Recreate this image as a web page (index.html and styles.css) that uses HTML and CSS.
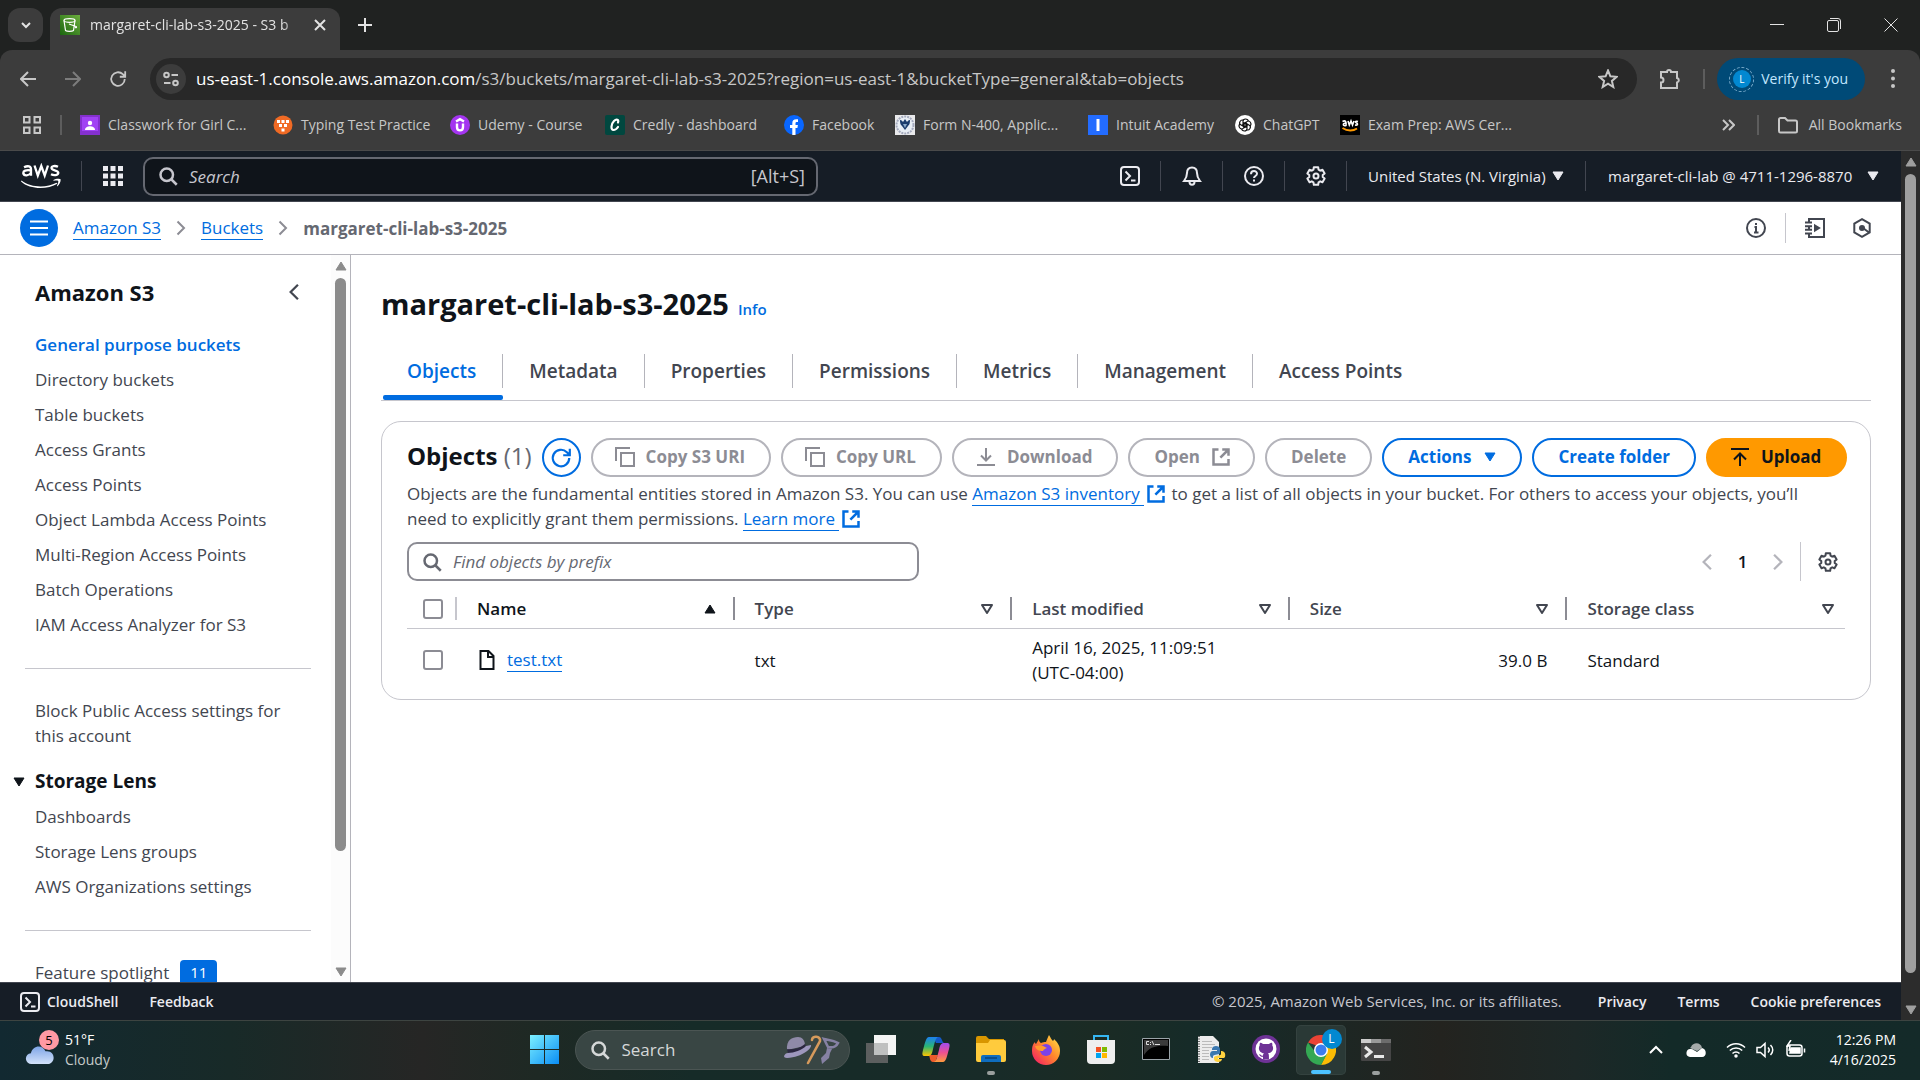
FILE: index.html
```html
<!DOCTYPE html>
<html lang="en">
<head>
<meta charset="utf-8">
<title>margaret-cli-lab-s3-2025 - S3 bucket</title>
<link rel="stylesheet" href="styles.css">
</head>
<body>
<svg class="sprite" aria-hidden="true">
  <symbol id="i-search" viewBox="0 0 16 16"><circle cx="7" cy="7" r="5"/><path d="M10.6 10.6 15 15"/></symbol>
  <symbol id="i-ext" viewBox="0 0 16 16"><path d="M6 2H2v12h12V9.500M9 2h5v5M14 2 7.500 8.500"/></symbol>
  <symbol id="i-copy" viewBox="0 0 20 20"><path d="M1 14V1h14M6 6h13v13H6z"/></symbol>
  <symbol id="i-gear" viewBox="0 0 20 20"><path stroke-linejoin="round" d="M12.180 1.270 12.550 3.700 14.190 4.640 16.470 3.750 18.650 7.520 16.730 9.050V10.950L18.650 12.480 16.470 16.250 14.190 15.360 12.550 16.300 12.180 18.730H7.820L7.450 16.300 5.810 15.360 3.530 16.250 1.350 12.480 3.270 10.950V9.050L1.350 7.520 3.530 3.750 5.810 4.640 7.450 3.700 7.820 1.270z"/><circle cx="10" cy="10" r="2.500"/></symbol>
  <symbol id="i-shell" viewBox="0 0 20 20"><rect x="1" y="1" width="18" height="18" rx="3"/><path d="m5.500 5.500 4.500 4.500-4.500 4.500M11 14.500h4.500"/></symbol>
  <symbol id="i-left" viewBox="0 0 16 16"><path d="M11.500 1.500 5 8l6.500 6.500"/></symbol>
  <symbol id="i-right" viewBox="0 0 16 16"><path d="M4.500 1.500 11 8l-6.500 6.500"/></symbol>
  <symbol id="i-down" viewBox="0 0 12 10"><path d="M1 1h10L6 9z"/></symbol>
  <symbol id="i-reload" viewBox="0 0 20 20"><path d="M17.500 10a7.500 7.500 0 1 1-2.200-5.300L18 7.300M18 1.500v6h-6"/></symbol>
</svg>

<header class="browser">
  <div class="tabstrip">
    <button class="tab-search" aria-label="Search tabs"><svg class="ln s12" viewBox="0 0 12 12"><path d="m2 4 4 4 4-4"/></svg></button>
    <div class="tab">
      <svg class="s20" viewBox="0 0 20 20"><defs><linearGradient id="g-s3" x1="0" y1="1" x2="1" y2="0"><stop stop-color="#1b660f"/><stop offset="1" stop-color="#6cae3e"/></linearGradient></defs><path fill="url(#g-s3)" d="M0 0h20v20H0z"/><g fill="none" stroke="#fff" stroke-width="1.200"><ellipse cx="9.500" cy="5.500" rx="5.500" ry="1.800"/><path d="m4 5.500 1.500 10c1.500 1.300 6.500 1.300 8 0l1.500-10M9 9l7 2.500c1 .5.500 1.500-1 1"/></g></svg>
      <span class="tab-title">margaret-cli-lab-s3-2025 - S3 b</span>
      <button class="plain" aria-label="Close tab"><svg class="ln s14" viewBox="0 0 14 14"><path d="m2 2 10 10M12 2 2 12"/></svg></button>
    </div>
    <button class="plain new-tab" aria-label="New tab"><svg class="ln s14" viewBox="0 0 14 14"><path d="M7 0v14M0 7h14"/></svg></button>
    <div class="win-controls">
      <button class="plain" aria-label="Minimize"><svg class="ln thin s14" viewBox="0 0 14 14"><path d="M0 6.500h14"/></svg></button>
      <button class="plain" aria-label="Restore"><svg class="ln thin s14" viewBox="0 0 14 14"><rect x=".5" y="2.500" width="11" height="11" rx="1.500"/><path d="M3 .5h8a2.500 2.500 0 0 1 2.500 2.500v8"/></svg></button>
      <button class="plain" aria-label="Close"><svg class="ln thin s14" viewBox="0 0 14 14"><path d="m.5.5 13 13M13.500.5l-13 13"/></svg></button>
    </div>
  </div>
  <div class="toolbar">
    <div class="nav-row">
      <div class="nav-btns">
        <button class="plain" aria-label="Back"><svg class="ln s16" viewBox="0 0 16 16"><path d="M16 8H1.500M8 1 1 8l7 7"/></svg></button>
        <button class="plain dim" aria-label="Forward"><svg class="ln s16" viewBox="0 0 16 16"><path d="M0 8h14.500M8 1l7 7-7 7"/></svg></button>
        <button class="plain" aria-label="Reload"><svg class="ln s18"><use href="#i-reload"/></svg></button>
      </div>
      <div class="omnibox">
        <span class="site-info"><svg class="ln s16" viewBox="0 0 16 16"><circle cx="3.500" cy="4" r="2.300"/><path d="M8.500 4H15M1 12h6.500"/><circle cx="12.500" cy="12" r="2.300"/></svg></span>
        <p class="url"><b>us-east-1.console.aws.amazon.com</b>/s3/buckets/margaret-cli-lab-s3-2025?region=us-east-1&amp;bucketType=general&amp;tab=objects</p>
        <svg class="ln s20" viewBox="0 0 20 20"><path d="m10 1.500 2.400 5.800 6.200.5-4.700 4.100 1.400 6.100-5.300-3.300L4.700 18l1.400-6.100-4.700-4.100 6.200-.5z"/></svg>
      </div>
      <button class="plain puzzle" aria-label="Extensions"><svg class="ln s22" viewBox="0 0 22 22"><path d="M2 4h6a2 2 0 0 1 4 0h6v6a2.300 2.300 0 0 1 0 4.500V20H2v-5.500a2.500 2.500 0 0 0 0-5z"/></svg></button>
      <i class="vsep"></i>
      <button class="verify"><span class="ring"><span>L</span></span>Verify it's you</button>
      <button class="plain kebab" aria-label="Menu"><svg class="s22 fill" viewBox="0 0 22 22"><circle cx="11" cy="3" r="2"/><circle cx="11" cy="10.500" r="2"/><circle cx="11" cy="18" r="2"/></svg></button>
    </div>
    <nav class="bookmarks">
      <svg class="ln s18 apps" viewBox="0 0 18 18"><path d="M1 1h5.500v5.500H1zM11.500 1H17v5.500h-5.500zM1 11.500h5.500V17H1zM11.500 11.500H17V17h-5.500z"/></svg>
      <i class="vsep"></i>
      <div class="bm-list">
        <a href="#"><svg class="s20" viewBox="0 0 20 20"><path fill="#8430ce" d="M0 0h20v20H0z"/><path fill="#a142f4" d="M2 2h16v14H2z"/><circle cx="10" cy="8" r="2.200" fill="#fff"/><path fill="#fff" d="M5 15c0-5 10-5 10 0z"/></svg>Classwork for Girl C...</a>
        <a href="#"><svg class="s20" viewBox="0 0 20 20"><circle cx="10" cy="10" r="9.500" fill="#f06a24"/><path fill="#fff" d="M4 5h3v3H4zm4.500 0h3v3h-3zM13 5h3v3h-3zM6 9h3v3H6zm5 0h3v3h-3zm-2.500 4.500h3v3h-3z"/></svg>Typing Test Practice</a>
        <a href="#"><svg class="s20" viewBox="0 0 20 20"><circle cx="10" cy="10" r="10" fill="#a435f0"/><path fill="none" stroke="#fff" stroke-width="2.400" d="m6 6.500 4-2.300 4 2.300M7 8.500V12c0 4.500 6 4.500 6 0V8.500"/></svg>Udemy - Course</a>
        <a href="#"><svg class="s20" viewBox="0 0 20 20"><rect width="20" height="20" rx="2" fill="#00473f"/><path fill="none" stroke="#fff" stroke-width="2.200" stroke-linecap="round" d="M13 7.500c1-3-1.500-4-4-1.500-3 3-3.500 9-.5 9 2 0 3.500-1.500 4.500-3"/></svg>Credly - dashboard</a>
        <a href="#"><svg class="s20" viewBox="0 0 20 20"><circle cx="10" cy="10" r="10" fill="#0866ff"/><path fill="#fff" d="M8.300 20v-7H6v-3h2.300V8.500C8.300 5 10 3.800 14 4.300V7c-2-.1-2.500.2-2.500 1.500V10h2.400l-.5 3h-1.900v7z"/></svg>Facebook</a>
        <a href="#"><svg class="s20" viewBox="0 0 20 20"><path fill="#e9eaec" d="M0 0h20v20H0z"/><circle cx="10" cy="10" r="8.500" fill="#e8eef5" stroke="#a3a9bd" stroke-width="2" stroke-dasharray="2 1"/><path fill="#1b3d6d" d="M5 5c2 0 2 1 3 2l2-3 2 3c1-1 1-2 3-2 0 4-1 5-2 6l-3 4-3-4C6 10 5 9 5 5z"/><path fill="#8aa9c9" d="M8 9h4l-2 4z"/></svg>Form N-400, Applic...</a>
        <a href="#"><svg class="s20" viewBox="0 0 20 20"><path fill="#236cff" d="M0 0h20v20H0z"/><path fill="#fff" d="M8.500 4h3v12h-3z"/></svg>Intuit Academy</a>
        <a href="#"><svg class="s20" viewBox="0 0 20 20"><circle cx="10" cy="10" r="10" fill="#fff"/><g fill="none" stroke="#111" stroke-width="1.100"><path id="petal" d="M8 10.500V6.200c0-3 5-3 5.300 0M8 7.500l4.500 2.600"/><use href="#petal" transform="rotate(60 10 10)"/><use href="#petal" transform="rotate(120 10 10)"/><use href="#petal" transform="rotate(180 10 10)"/><use href="#petal" transform="rotate(240 10 10)"/><use href="#petal" transform="rotate(300 10 10)"/></g></svg>ChatGPT</a>
        <a href="#"><svg class="s20" viewBox="0 0 20 20"><path d="M0 0h20v20H0z"/><g fill="none" stroke="#fff" stroke-width="1.600"><path d="M2.500 6.500c3-1.500 4 0 3.500 4-3 1-4-2 0-2.500M8 6l1.300 4L11 6l1.500 4L14 6M18 6.500c-3-1-3 1-1.500 1.500s1.500 2.500-1.500 2"/></g><path fill="none" stroke="#f90" stroke-width="1.800" d="M2.500 13c5 3.500 11 3 14.500.5"/></svg>Exam Prep: AWS Cer...</a>
      </div>
      <svg class="ln s14 chev2" viewBox="0 0 14 14"><path d="m2 2 5 5-5 5M8 2l5 5-5 5"/></svg>
      <i class="vsep"></i>
      <a href="#" class="all-bm"><svg class="ln s20" viewBox="0 0 20 20"><path d="M1 4.500a1.500 1.500 0 0 1 1.500-1.500H7l2.500 2.500h8A1.500 1.500 0 0 1 19 7v9a1.500 1.500 0 0 1-1.500 1.500h-15A1.500 1.500 0 0 1 1 16z"/></svg>All Bookmarks</a>
    </nav>
  </div>
</header>

<div class="viewport">
  <div class="console">
    <header class="aws-nav">
      <a href="#" class="logo" aria-label="AWS home"><svg viewBox="0 0 40 24"><g fill="none" stroke="#fff" stroke-width="2.300"><path d="M3 3.300c4-2 7-1 7 2v6.500M10 6.500C5 5.500 2 7 2.300 9.300c.5 3 6 2.500 7.700-.6M13.500 1.500l3.300 10L20.300 2l3.400 9.500L27 1.500M37 2.800c-3-1.500-6.500-.8-6.500 1.300 0 2.900 6.800 1.500 6.800 4.700 0 2.500-4.300 3-7.300 1.400"/></g><path fill="#fff" d="M.5 16.500c10 7.500 25 7.500 35 2.200l.8 1C27 25.500 9 26 0 17.500zM32.500 16c2-1.500 6.500-1.500 7-.7.500 1-.5 5-3 6.900-.4.200-.7 0-.5-.4.700-1.800 1.600-4.200 1.200-4.900-.5-.6-2.800-.4-4.300-.2-.5.100-.8-.3-.4-.7z"/></svg></a>
      <i class="sep"></i>
      <button class="plain grid9" aria-label="Services"><svg class="s20" viewBox="0 0 20 20"><path fill="#ebebf0" d="M0 0h5v5H0zm7.500 0h5v5h-5zM15 0h5v5h-5zM0 7.500h5v5H0zm7.500 0h5v5h-5zm7.500 0h5v5h-5zM0 15h5v5H0zm7.500 0h5v5h-5zm7.500 0h5v5h-5z"/></svg></button>
      <label class="aws-search"><svg class="ln s20"><use href="#i-search"/></svg><input type="text" placeholder="Search" aria-label="Search"><kbd>[Alt+S]</kbd></label>
      <div class="aws-right">
        <button class="plain cell" aria-label="CloudShell"><svg class="ln s20"><use href="#i-shell"/></svg></button><i class="sep"></i>
        <button class="plain cell" aria-label="Notifications"><svg class="ln s20" viewBox="0 0 20 20"><path d="M10 1.500c-3.500 0-5 2.500-5 5.500 0 4-1 5.500-3 8h16c-2-2.500-3-4-3-8 0-3-1.500-5.500-5-5.500zM7.500 16c0 3.500 5 3.500 5 0"/></svg></button><i class="sep"></i>
        <button class="plain cell" aria-label="Help"><svg class="ln s20" viewBox="0 0 20 20"><circle cx="10" cy="10" r="9"/><path d="M7 8.200C7 4 13 4.300 13 7.700c0 2.300-3 2.200-3 4.300M10 13.500v2"/></svg></button><i class="sep"></i>
        <button class="plain cell" aria-label="Settings"><svg class="ln s20"><use href="#i-gear"/></svg></button><i class="sep"></i>
        <button class="plain region">United States (N. Virginia)<svg class="tri"><use href="#i-down"/></svg></button><i class="sep"></i>
        <button class="plain account">margaret-cli-lab @ 4711-1296-8870<svg class="tri"><use href="#i-down"/></svg></button>
      </div>
    </header>

    <div class="crumb-bar">
      <button class="menu-btn" aria-label="Open navigation"><svg viewBox="0 0 18 16"><path d="M0 1.500h18M0 8h18M0 14.500h18"/></svg></button>
      <nav class="crumbs" aria-label="Breadcrumbs">
        <a href="#">Amazon S3</a><svg class="ln s16"><use href="#i-right"/></svg><a href="#">Buckets</a><svg class="ln s16"><use href="#i-right"/></svg><b>margaret-cli-lab-s3-2025</b>
      </nav>
      <div class="crumb-tools">
        <button class="plain" aria-label="Info"><svg class="ln s20" viewBox="0 0 20 20"><circle cx="10" cy="10" r="9"/><path d="M10 5v2M8.500 9H10v5M8 14.500h4.500"/></svg></button>
        <i class="sep"></i>
        <button class="plain" aria-label="Tutorials"><svg class="ln s20" viewBox="0 0 20 20"><path d="M4 5V1h15v18H4v-4M4 8v4M0 4.500h7M0 8.200h7M0 11.800h7M0 15.500h7"/><path d="m10 7.500 4 2.500-4 2.500z" fill="currentColor"/></svg></button>
        <button class="plain" aria-label="Recents"><svg class="ln s20" viewBox="0 0 20 20"><path d="m10 1.200 7.700 4.400v8.800L10 18.800l-7.700-4.400V5.600zM11 10l6 4.500"/><circle cx="10" cy="10" r="2" fill="currentColor"/></svg></button>
      </div>
    </div>

    <div class="workspace">
      <aside class="sidebar">
        <div class="side-scroll">
          <div class="side-head"><h2>Amazon S3</h2><button class="plain" aria-label="Close navigation"><svg class="ln s18"><use href="#i-left"/></svg></button></div>
          <ul class="side-list">
            <li><a href="#" class="on">General purpose buckets</a></li>
            <li><a href="#">Directory buckets</a></li>
            <li><a href="#">Table buckets</a></li>
            <li><a href="#">Access Grants</a></li>
            <li><a href="#">Access Points</a></li>
            <li><a href="#">Object Lambda Access Points</a></li>
            <li><a href="#">Multi-Region Access Points</a></li>
            <li><a href="#">Batch Operations</a></li>
            <li><a href="#">IAM Access Analyzer for S3</a></li>
          </ul>
          <hr>
          <ul class="side-list"><li><a href="#">Block Public Access settings for this account</a></li></ul>
          <h3><svg class="tri"><use href="#i-down"/></svg>Storage Lens</h3>
          <ul class="side-list">
            <li><a href="#">Dashboards</a></li>
            <li><a href="#">Storage Lens groups</a></li>
            <li><a href="#">AWS Organizations settings</a></li>
          </ul>
          <hr>
          <ul class="side-list"><li><a href="#">Feature spotlight</a><span class="badge">11</span></li></ul>
        </div>
        <div class="scrollbar light"><svg class="arrow" viewBox="0 0 12 10"><path d="M6 1 1 9h10z"/></svg><div class="track"><div class="thumb"></div></div><svg class="arrow" viewBox="0 0 12 10"><path d="M1 1h10L6 9z"/></svg></div>
      </aside>

      <main>
        <div class="title-row"><h1>margaret-cli-lab-s3-2025</h1><a href="#">Info</a></div>
        <nav class="tabs">
          <a href="#" class="on"><span>Objects</span></a><a href="#"><span>Metadata</span></a><a href="#"><span>Properties</span></a><a href="#"><span>Permissions</span></a><a href="#"><span>Metrics</span></a><a href="#"><span>Management</span></a><a href="#"><span>Access Points</span></a>
        </nav>
        <section class="card">
          <div class="card-head">
            <h2>Objects <span>(1)</span></h2>
            <div class="actions">
              <button class="btn round" aria-label="Refresh"><svg class="ln s22"><use href="#i-reload"/></svg></button>
              <button class="btn off" disabled><svg class="ln s20"><use href="#i-copy"/></svg>Copy S3 URI</button>
              <button class="btn off" disabled><svg class="ln s20"><use href="#i-copy"/></svg>Copy URL</button>
              <button class="btn off" disabled><svg class="ln s20" viewBox="0 0 20 20"><path d="M10 1v12M5 8.500l5 5 5-5M1 18h18"/></svg>Download</button>
              <button class="btn off" disabled>Open<svg class="ln s20"><use href="#i-ext"/></svg></button>
              <button class="btn off" disabled>Delete</button>
              <button class="btn">Actions<svg class="tri"><use href="#i-down"/></svg></button>
              <button class="btn">Create folder</button>
              <button class="btn primary"><svg class="ln s20" viewBox="0 0 20 20"><path d="M10 19V7M4 12.500l6-6 6 6M1 2h18"/></svg>Upload</button>
            </div>
          </div>
          <p class="desc">Objects are the fundamental entities stored in Amazon S3. You can use <a href="#"><span>Amazon S3 inventory </span><svg class="ln s20"><use href="#i-ext"/></svg></a> to get a list of all objects in your bucket. For others to access your objects, you’ll need to explicitly grant them permissions. <a href="#"><span>Learn more </span><svg class="ln s20"><use href="#i-ext"/></svg></a></p>
          <div class="filter-row">
            <label class="filter"><svg class="ln s20"><use href="#i-search"/></svg><input type="text" placeholder="Find objects by prefix" aria-label="Find objects by prefix"></label>
            <div class="pager">
              <button class="plain pg" aria-label="Previous page"><svg class="ln s18"><use href="#i-left"/></svg></button>
              <b>1</b>
              <button class="plain pg" aria-label="Next page"><svg class="ln s18"><use href="#i-right"/></svg></button>
              <i class="sep"></i>
              <button class="plain prefs" aria-label="Preferences"><svg class="ln s20"><use href="#i-gear"/></svg></button>
            </div>
          </div>
          <table>
            <colgroup><col class="c-check"><col><col><col><col><col></colgroup>
            <thead><tr>
              <th><input type="checkbox" aria-label="Select all"></th>
              <th class="sorted"><div>Name<svg class="tri" viewBox="0 0 12 10"><path d="M6 1 1 9h10z"/></svg></div></th>
              <th><div>Type<svg class="tri open"><use href="#i-down"/></svg></div></th>
              <th><div>Last modified<svg class="tri open"><use href="#i-down"/></svg></div></th>
              <th><div>Size<svg class="tri open"><use href="#i-down"/></svg></div></th>
              <th><div>Storage class<svg class="tri open"><use href="#i-down"/></svg></div></th>
            </tr></thead>
            <tbody><tr>
              <td><input type="checkbox" aria-label="Select test.txt"></td>
              <td><span class="file"><svg class="ln s20" viewBox="0 0 20 20"><path d="M3.500 1h8l5 5v13h-13zM11 1v6h5.500"/></svg><a href="#">test.txt</a></span></td>
              <td>txt</td>
              <td>April 16, 2025, 11:09:51<br>(UTC-04:00)</td>
              <td class="num">39.0 B</td>
              <td>Standard</td>
            </tr></tbody>
          </table>
        </section>
      </main>
    </div>

    <footer class="aws-foot">
      <a href="#"><svg class="ln s20"><use href="#i-shell"/></svg>CloudShell</a>
      <a href="#">Feedback</a>
      <span class="legal">© 2025, Amazon Web Services, Inc. or its affiliates.</span>
      <a href="#">Privacy</a>
      <a href="#">Terms</a>
      <a href="#">Cookie preferences</a>
    </footer>
  </div>
  <div class="scrollbar dark"><svg class="arrow" viewBox="0 0 12 10"><path d="M6 1 1 9h10z"/></svg><div class="track"><div class="thumb"></div></div><svg class="arrow" viewBox="0 0 12 10"><path d="M1 1h10L6 9z"/></svg></div>
</div>

<footer class="taskbar">
  <div class="weather">
    <div class="cloud"><svg viewBox="0 0 32 22"><defs><linearGradient id="g-cl" x2="0" y2="1"><stop stop-color="#7ea4e6"/><stop offset="1" stop-color="#d3e2fa"/></linearGradient></defs><path fill="url(#g-cl)" d="M7 21a6 6 0 0 1-1-12C8 0 19-1 22 7c6-1 9 3 9 7s-3 7-7 7z"/></svg><span>5</span></div>
    <p>51°F<br><span>Cloudy</span></p>
  </div>
  <div class="apps-row">
    <button class="plain app" aria-label="Start"><svg class="s30" viewBox="0 0 30 30"><defs><linearGradient id="g-win" x2="1" y2="1"><stop stop-color="#7cf0ff"/><stop offset="1" stop-color="#0a8df5"/></linearGradient></defs><path fill="url(#g-win)" d="M0 0h14v14H0zm15 0h14v14H15zM0 15h14v14H0zm15 0h14v14H15z"/></svg></button>
    <label class="tb-search"><svg class="ln s20"><use href="#i-search"/></svg><input type="text" placeholder="Search" aria-label="Search Windows">
      <svg class="art" viewBox="0 0 56 30"><path fill="#8f8aa8" d="M3 15C2 5 8 2 14 2c4 0 7 3 7 9z"/><path fill="#2b2740" d="M3 14c5 1 12 0 18-5l1 3c-5 5-12 7-18 6z"/><path fill="#9d97bd" d="M0 21c1-2 2-3 4-3 6 0 14-3 18-7l5-1c1 3-8 12-24 13-2 0-3-1-3-2z"/><path fill="none" stroke="#d69a5c" stroke-width="2.600" stroke-linecap="round" d="M28 5c0-5 9-4 8 1L24 28"/><path fill="none" stroke="#8681a3" stroke-width="2.600" d="M40 4c4 1 9 1 14 4-2 4-6 5-10 4z"/><path fill="#8681a3" d="m43 13 5 1-2 4-1 5-7 6-1-6 5-5z"/></svg></label>
    <button class="plain app" aria-label="Task view"><svg class="s30" viewBox="0 0 30 30"><path fill="#5c5f5f" d="M0 8h22v20H0z"/><path fill="#f4f4f4" d="M8 0h22v20H8z"/><path fill="#bfc0c0" d="M8 8h14v12H8z"/></svg></button>
    <button class="plain app" aria-label="Copilot"><svg class="s30" viewBox="0 0 30 30"><defs><linearGradient id="g-ca" x2="0" y2="1"><stop stop-color="#1c7ff0"/><stop offset=".5" stop-color="#2bb673"/><stop offset="1" stop-color="#ffc500"/></linearGradient><linearGradient id="g-cb" x2="0" y2="1"><stop stop-color="#a04cf0"/><stop offset=".5" stop-color="#ee4f93"/><stop offset="1" stop-color="#ff9b3d"/></linearGradient></defs><path fill="#1459c7" d="M12 2h6c3 0 3 5 5 6h-8z"/><path fill="#ef5b2c" d="M8 20h9l-3 7h-2c-3 0-3-4-4-7z"/><path fill="url(#g-ca)" d="M8 2h9c-3 2-3 5-5 12-1 5-2 7-5 7H4c-3 0-3-2-2-6C4 8 5 2 8 2z"/><path fill="url(#g-cb)" d="M22 27h-9c3-2 3-5 5-12 1-5 2-7 5-7h3c3 0 3 2 2 6-2 7-3 13-6 13z"/></svg></button>
    <button class="plain app run" aria-label="File Explorer"><svg class="s30" viewBox="0 0 30 30"><path fill="#d89600" d="M0 3a2 2 0 0 1 2-2h8l3 3h15v6H0z"/><path fill="#ffcb3d" d="M0 8h12l2-3h14a2 2 0 0 1 2 2v18a2 2 0 0 1-2 2H2a2 2 0 0 1-2-2z"/><path fill="#0f6dbf" d="M5 27v-5a2 2 0 0 1 2-2h16a2 2 0 0 1 2 2v5z"/><path fill="#0a4d8c" d="M9 22h12v2H9z"/></svg></button>
    <button class="plain app" aria-label="Firefox"><svg class="s30" viewBox="0 0 30 30"><defs><linearGradient id="g-ff" x1="1" x2="0" y2="1"><stop stop-color="#ffe94a"/><stop offset=".45" stop-color="#ff8a2b"/><stop offset="1" stop-color="#f4106c"/></linearGradient></defs><path fill="url(#g-ff)" d="M18 0c2 3 2 4 4 6 1-1 1-2 1-2 4 4 6 7 6 12a14 14 0 0 1-28 0c0-5 1-7 3-9 0 1 0 1 1 2l3-5c0 3 1 3 2 4 2-1 3-1 5-1 1-3 2-5 3-7z"/><circle cx="15" cy="15" r="6" fill="#7b42e8"/><path fill="#ff9a2e" d="M4 11c4-1 8-1 12 2-2 1-3 1-4 3-4 0-7-1-8-5z"/></svg></button>
    <button class="plain app" aria-label="Microsoft Store"><svg class="s30" viewBox="0 0 30 30"><path fill="none" stroke="#35b6f2" stroke-width="2" d="M8 7V1h14v6"/><path fill="#eee" d="M1 5h28v20a4 4 0 0 1-4 4H5a4 4 0 0 1-4-4z"/><path fill="#f25022" d="M10 12h5v5h-5z"/><path fill="#7fba00" d="M16 12h5v5h-5z"/><path fill="#00a4ef" d="M10 18h5v5h-5z"/><path fill="#ffb900" d="M16 18h5v5h-5z"/></svg></button>
    <button class="plain app" aria-label="Command Prompt"><svg class="s30" viewBox="0 0 30 30"><path stroke="#9aa3a8" d="M1.500 3.500h27v21h-27z"/><path fill="#3a3a3a" d="M3 5h24v6C16 10 8 12 3 20z"/><path fill="none" stroke="#ddd" d="M8 6.500H5.500v3H8M9.500 7v1m0 1v1M11 6l2 4M14 9.500h5"/></svg></button>
    <button class="plain app" aria-label="IDLE"><svg class="s30" viewBox="0 0 30 30"><path fill="#ececec" d="M2 1h15l6 6v21H2z"/><path fill="none" stroke="#666" stroke-dasharray="1 1.500" stroke-width="2" d="M3 1v27"/><path fill="none" stroke="#bbb" d="M6 6.500h10M6 9.500h13M6 12.500h10M6 15.500h7M6 18.500h7M6 21.500h7M6 24.500h7"/><path fill="#3b78b0" d="M16 14c0-4 8-4 8 0v4c0 2-6 1-7 3v2c-4 0-4-7 0-7h4v-1h-5z"/><path fill="#ffd23f" d="M29 22c1-4-1-6-4-6v3c0 2-5 1-7 3v2c0 4 8 4 8 0h-4v-1h6z"/></svg></button>
    <button class="plain app" aria-label="GitHub Desktop"><svg class="s30" viewBox="0 0 30 30"><circle cx="15" cy="14" r="14" fill="#6e3296"/><circle cx="15" cy="14" r="10.500" fill="#fff"/><path fill="#6e3296" d="M9 8c1-1 3 1 3 1h6s2-2 3-1c.6 1 .3 2.500.3 2.500C23.500 14 21 18 17 18.300c1 1 1 2 1 6h-6v-2.500c-2.500.5-3-1-4-2.500 2-.3 2 2 4 1.200 0-1 .3-1.500 1-2.200-4-.3-6.500-4.300-4.300-7.800C8.700 10.500 8.400 9 9 8z"/></svg></button>
    <button class="plain app run active" aria-label="Chrome"><svg class="s30" viewBox="0 0 30 30"><path fill="#ea4335" d="M2 7.500a15 15 0 0 1 26 0L15 12z"/><path fill="#fbbc04" d="M28 7.500A15 15 0 0 1 15 30l6-12-3-10.500z"/><path fill="#34a853" d="M2 7.500A15 15 0 0 0 15 30l6-11-11-1z"/><circle cx="15" cy="15" r="7" fill="#fff"/><circle cx="15" cy="15" r="5.500" fill="#3c7df0"/></svg><span class="who">L</span></button>
    <button class="plain app run" aria-label="Terminal"><svg class="s30" viewBox="0 0 30 30"><rect y="4" width="30" height="22" rx="1" fill="#454545"/><path fill="#ccc" d="M0 4h10v4H0z"/><path fill="#9a9a9a" d="M10 4h10v4H10z"/><path fill="#6c6c6c" d="M20 4h10v4H20z"/><path fill="none" stroke="#e8e8e8" stroke-width="3" d="m4 12 6 5-6 5M13 21.500h10"/></svg></button>
  </div>
  <div class="tray">
    <svg class="ln s16" viewBox="0 0 16 16"><path d="m2 11 6-6 6 6"/></svg>
    <svg class="s20 od" viewBox="0 0 20 20"><path fill="#a5aaaa" d="M5 7c2-5 10-5 11 1l-5 3-7-3z"/><path fill="#fff" d="M4 17a4 4 0 1 1 1-8c2 0 4 2 6 3l5-4c5 1 5 9 0 9z"/></svg>
    <svg class="fine s20" viewBox="0 0 20 20"><path d="M1 7.500c5-5 13-5 18 0M3.800 10.500c3.500-3.500 9-3.500 12.400 0M6.500 13.500c2-2 5-2 7 0"/><circle cx="10" cy="16" r="1" fill="currentColor"/></svg>
    <svg class="fine s20" viewBox="0 0 20 20"><path d="M1 7.500h3.500L9 3.500v13l-4.500-4H1zM12 7.500c1.500 1.500 1.500 3.500 0 5M14.500 5c3 3 3 7 0 10"/></svg>
    <svg class="fine s20" viewBox="0 0 20 20"><rect x="1" y="5" width="15" height="11" rx="2.500"/><path d="M18.500 8.500v4M5 0 1 6h3l-1 5"/><path fill="currentColor" d="M5 8h9v5H4z"/></svg>
    <p>12:26 PM<br>4/16/2025</p>
  </div>
</footer>
</body>
</html>
```
FILE: styles.css
```css
* { box-sizing: border-box; }
body {
  margin: 0;
  height: 100vh;
  display: flex;
  flex-direction: column;
  overflow: hidden;
  font-family: "Open Sans", "Noto Sans", sans-serif;
  font-size: 17px;
  line-height: 25px;
  color: #0f141a;
  background: #fff;
}
h1, h2, h3, p, ul { margin: 0; padding: 0; }
ul { list-style: none; }
a { color: #006ce0; text-decoration: none; }
button, input { font: inherit; color: inherit; }
svg { flex: none; display: block; }
.sprite { position: absolute; width: 0; height: 0; }
.plain {
  display: inline-flex;
  align-items: center;
  justify-content: center;
  border: 0;
  padding: 0;
  background: none;
}
.ln { fill: none; stroke: currentColor; stroke-width: 2; }
.fine { fill: none; stroke: currentColor; stroke-width: 1.5; }
.thin { stroke-width: 1; }
.fill { fill: currentColor; }
.s12 { width: 12px; height: 12px; }
.s14 { width: 14px; height: 14px; }
.s16 { width: 16px; height: 16px; }
.s18 { width: 18px; height: 18px; }
.s20 { width: 20px; height: 20px; }
.s22 { width: 22px; height: 22px; }
.s30 { width: 30px; height: 30px; }
.tri { width: 12px; height: 10px; fill: currentColor; stroke: currentColor; stroke-width: 1; stroke-linejoin: round; }
.tri.open { fill: none; stroke-width: 2; }

/* Browser chrome */
.browser { flex: none; background: #202221; color: #e3e3e3; font-size: 14px; line-height: 20px; }
.tabstrip { display: flex; height: 50px; padding: 8px 0 0 8px; }
.tab-search {
  display: flex; align-items: center; justify-content: center;
  width: 35px; height: 34px; margin-right: 7px;
  border: 0; border-radius: 12px; background: #3c3c3c;
}
.tab {
  display: flex; align-items: center;
  width: 290px; padding: 0 13px 8px 10px;
  border-radius: 12px 12px 0 0; background: #3c3c3c;
}
.tab-title {
  flex: 1; margin: 0 10px; white-space: nowrap;
  mask-image: linear-gradient(90deg, #000 90%, transparent);
}
.new-tab { width: 50px; height: 34px; }
.win-controls { display: flex; margin-left: auto; height: 34px; padding-right: 1px; }
.win-controls .plain { width: 57px; }
.toolbar { height: 101px; background: #3c3c3c; border-radius: 12px 12px 0 0; border-bottom: 1px solid #4a4a4a; }
.nav-row { display: flex; align-items: center; height: 58px; color: #c7c7c7; }
.nav-btns { display: flex; width: 150px; padding-left: 5px; }
.nav-btns .plain { width: 45px; }
.nav-btns .dim { color: #7c7c7c; }
.omnibox {
  flex: 1; display: flex; align-items: center; height: 42px;
  padding: 0 19px 0 6px; border-radius: 21px; background: #282828;
}
.site-info { display: flex; align-items: center; justify-content: center; width: 30px; height: 30px; border-radius: 50%; background: #3c3c3c; }
.url { flex: 1; margin-left: 10px; font-size: 17px; line-height: 24px; white-space: nowrap; }
.url b { font-weight: 400; color: #fff; }
.puzzle { width: 66px; }
.vsep { flex: none; width: 2px; height: 20px; background: #5d5d5d; }
.verify {
  display: flex; align-items: center; gap: 7px; height: 42px; margin-left: 12px;
  padding: 0 17px 0 12px; border: 0; border-radius: 21px;
  background: #004a77; color: #c2e7ff; white-space: nowrap;
}
.ring { display: flex; align-items: center; justify-content: center; width: 25px; height: 25px; border: 1px dashed #7fb0cf; border-radius: 50%; }
.ring span { width: 18px; height: 18px; border-radius: 50%; background: #0288d1; color: #fff; font-size: 10px; line-height: 18px; }
.kebab { width: 55px; }
.bookmarks { display: flex; align-items: center; height: 34px; padding: 0 18px 0 23px; color: #c7c7c7; }
.bookmarks a { display: flex; align-items: center; gap: 8px; color: #c7c7c7; white-space: nowrap; }
.apps { margin-right: 19px; }
.bm-list { flex: 1; display: grid; grid-template-columns: 193px 177px 155px 179px 111px 193px 147px 105px auto; margin-left: 18px; }
.chev2 { margin-right: 22px; }
.bookmarks .all-bm { margin-left: 19px; gap: 11px; }

/* Console frame */
.viewport { flex: 1; display: flex; min-height: 0; }
.console { flex: 1; display: flex; flex-direction: column; min-width: 0; }
.sep { flex: none; width: 1px; height: 30px; background: #424650; }
.aws-nav {
  flex: none; display: flex; align-items: center; height: 51px; padding-left: 21px;
  background: #161d26; border-bottom: 1px solid #424650; color: #ebebf0; font-size: 15px;
}
.logo svg { width: 40px; height: 26px; }
.logo { margin-right: 20px; }
.grid9 { width: 61px; }
.aws-search, .filter {
  display: flex; align-items: center; gap: 11px;
  height: 39px; border: 2px solid #656871; border-radius: 10px;
}
.aws-search { width: 675px; padding: 0 11px 0 13px; background: #0f141a; color: #c6c6cd; font-size: 17px; }
input[type="text"] { flex: 1; min-width: 0; border: 0; outline: 0; padding: 0; background: none; }
input::placeholder { color: inherit; opacity: 1; }
.aws-search input, .filter input { font-style: italic; }
.aws-search kbd { font-family: inherit; font-size: 18px; }
.aws-right { display: flex; align-items: center; margin-left: auto; font-weight: 500; }
.cell { width: 61px; }
.region, .account { justify-content: space-between; white-space: nowrap; }
.region { width: 238px; padding: 0 21px; }
.account { width: 315px; padding: 0 22px; }

.crumb-bar { flex: none; display: flex; align-items: center; height: 53px; padding: 0 29px 0 20px; border-bottom: 1px solid #b4b4bb; }
.menu-btn { display: flex; align-items: center; justify-content: center; width: 38px; height: 38px; padding: 0; border: 0; border-radius: 50%; background: #006ce0; }
.menu-btn svg { width: 18px; height: 16px; stroke: #fff; stroke-width: 2; }
.crumbs { display: flex; align-items: center; gap: 12px; margin-left: 15px; color: #8c8c94; }
.crumbs a, .file a { line-height: 22px; border-bottom: 1px solid #006ce0; }
.crumbs b { font-weight: 700; color: #656871; }
.crumb-tools { display: flex; align-items: center; margin-left: auto; gap: 19px; color: #424650; }
.crumb-tools .sep { background: #c6c6cd; }
.crumb-tools .plain:last-child { margin-left: 8px; }

.workspace { flex: 1; display: flex; min-height: 0; }
.sidebar { flex: none; display: flex; width: 351px; border-right: 1px solid #b4b4bb; }
.side-scroll { flex: 1; overflow: hidden; padding-top: 22px; }
.side-head { display: flex; justify-content: space-between; padding: 0 28px 0 35px; margin-bottom: 20px; }
.side-head h2 { font-size: 22px; line-height: 30px; font-weight: 700; }
.side-head .plain, .side-list a { color: #424650; }
.side-list { padding: 0 40px 0 35px; }
.side-list li { display: flex; align-items: center; padding: 5px 0; }
.side-list .on { color: #006ce0; font-weight: 600; }
.side-scroll hr { height: 1px; margin: 26px 20px 24px 25px; border: 0; background: #c6c6cd; }
.side-scroll h3 { display: flex; align-items: center; gap: 10px; margin: 16px 0 5px 13px; font-size: 19px; line-height: 25px; font-weight: 700; }
.side-list .badge { margin-left: 11px; padding: 0 10px; border-radius: 4px; background: #006ce0; color: #fff; font-size: 15px; }

.scrollbar { flex: none; display: flex; flex-direction: column; align-items: center; width: 19px; padding: 6px 0 5px; }
.arrow { width: 12px; height: 10px; stroke-width: 1; stroke-linejoin: round; }
.track { flex: 1; width: 11px; padding: 7px 0; }
.thumb { border-radius: 6px; }
.light { background: #fcfcfc; }
.light .arrow { fill: #8b8b8b; stroke: #8b8b8b; }
.light .thumb { height: 84%; background: #8b8b8b; }
.dark { background: #2c2c2c; }
.dark .arrow { fill: #9f9f9f; stroke: #9f9f9f; }
.dark .thumb { height: 97%; background: #9f9f9f; }

/* Main panel */
main { flex: 1; min-width: 0; padding: 29px 30px 0; }
.title-row { display: flex; align-items: baseline; gap: 9px; }
h1 { font-size: 29px; line-height: 40px; font-weight: 700; }
.title-row a { font-size: 15px; font-weight: 600; }
.tabs { display: flex; margin-top: 20px; border-bottom: 1px solid #c6c6cd; }
.tabs a { position: relative; display: flex; padding: 10px 0 12px; color: #424650; font-size: 19px; font-weight: 600; }
.tabs span { padding: 5px 26px 4px; line-height: 25px; border-right: 1px solid #b4b4bb; }
.tabs a:last-child span { border: 0; }
.tabs .on { color: #006ce0; }
.tabs .on::after { content: ""; position: absolute; left: 2px; right: 0; bottom: 0; height: 5px; border-radius: 2px; background: #006ce0; }
.card { margin-top: 20px; padding: 16px 25px 0; min-height: 279px; border: 1px solid #c6c6cd; border-radius: 20px; }
.card-head { display: flex; align-items: center; gap: 10px; }
.card-head h2 { font-size: 24px; line-height: 30px; margin-bottom: 4px; font-weight: 700; white-space: nowrap; }
.card-head h2 span { font-weight: 400; color: #656871; }
.actions { flex: 1; display: flex; justify-content: flex-end; gap: 10px; }
.btn {
  display: flex; align-items: center; justify-content: center; gap: 13px;
  height: 39px; padding: 0 24px 2px; border: 2px solid #006ce0; border-radius: 20px;
  background: #fff; color: #006ce0; font-weight: 700; white-space: nowrap;
}
.btn.round { width: 39px; padding: 0; }
.btn.off { border-color: #b4b4bb; color: #8c8c94; }
.btn .s20:first-child { margin-left: -2px; }
.btn .s20:last-child { margin-right: -2px; }
.btn.primary { border-color: #ff9900; background: #ff9900; color: #0f141a; }
.desc { margin-top: 4px; padding-right: 20px; color: #424650; }
.desc a span { border-bottom: 1px solid #006ce0; }
.desc svg { display: inline-block; margin: 0 1px 0 2px; vertical-align: -4px; }
.filter-row { display: flex; justify-content: space-between; align-items: center; margin-top: 11px; }
.filter { width: 512px; padding: 0 14px 0 13px; border-color: #8c8c94; color: #656871; }
.pager { display: flex; align-items: center; color: #0f141a; }
.pg { width: 36px; color: #b4b4bb; }
.pager b { width: 35px; font-weight: 600; text-align: center; }
.pager .sep { height: 39px; margin-left: 4px; background: #c6c6cd; }
.prefs { width: 53px; margin-right: -9px; color: #424650; }
table { width: 100%; margin-top: 8px; table-layout: fixed; border-collapse: separate; border-spacing: 0; }
.c-check { width: 50px; }
th { height: 40px; padding: 0; border-bottom: 1px solid #c6c6cd; text-align: left; color: #424650; font-weight: 600; }
th div { display: flex; align-items: center; justify-content: space-between; padding: 0 17px 0 20px; border-right: 2px solid #8c8c94; line-height: 23px; }
th:last-child div { padding-right: 11px; border: 0; }
th.sorted { color: #0f141a; }
td { height: 62px; padding: 0 20px; }
th:first-child, td:first-child { padding: 0 0 0 16px; }
td.num { text-align: right; }
input[type="checkbox"] { appearance: none; display: block; width: 20px; height: 20px; margin: 0; border: 2px solid #8c8c94; border-radius: 3px; background: #fff; }
th:first-child { background: linear-gradient(#c6c6cd, #c6c6cd) no-repeat right 0 center / 2px 23px; }
.file { display: flex; align-items: center; gap: 10px; }

.aws-foot {
  flex: none; display: flex; align-items: center; gap: 31px; height: 38px; padding: 0 20px;
  background: #161d26; border-top: 1px solid #424650; color: #c6c6cd; font-size: 15px;
}
.aws-foot a { display: flex; align-items: center; gap: 7px; color: #ebebf0; font-size: 14px; font-weight: 600; }
.legal { margin: 0 5px 0 auto; }

/* Windows taskbar */
.taskbar {
  flex: none; display: grid; grid-template-columns: 1fr auto 1fr; align-items: center; height: 60px; padding-bottom: 1px;
  border-top: 1px solid #3d4441; color: #fff; font-size: 14px; line-height: 20px;
  background: linear-gradient(90deg, #122931 0, #182a28 12%, #262625 22%, #1e2924 28%, #162b28 36%, #182b28 52%, #1b2b24 57%, #152b29 63%, #23231f 75%, #1d2827 82%, #132a28 87%, #142a29 100%);
}
.weather { display: flex; align-items: center; gap: 10px; padding-left: 25px; }
.cloud { position: relative; width: 30px; height: 40px; padding-top: 15px; }
.cloud svg { width: 30px; height: 20px; }
.cloud span { position: absolute; left: 14px; top: 0; width: 20px; height: 20px; border-radius: 50%; background: #ff99a4; color: #000; font-size: 13px; text-align: center; }
.weather p span { color: #c5cac9; }
.apps-row { display: flex; align-items: center; gap: 5px; height: 58px; }
.app { position: relative; width: 50px; height: 50px; border-radius: 5px; }
.app.run::after { content: ""; position: absolute; left: 21px; bottom: 0; width: 8px; height: 4px; border-radius: 2px; background: #9a9f9e; }
.app.active { background: #2a3936; box-shadow: inset 0 0 0 1px #34423f; }
.app.active::after { left: 15px; bottom: 1px; width: 20px; background: #4cc2ff; }
.who { position: absolute; right: 4px; top: 4px; width: 20px; height: 20px; border-radius: 50%; background: #0288d1; color: #fff; font-size: 12px; }
.tb-search {
  display: flex; align-items: center; gap: 12px; width: 275px; height: 40px; padding: 0 9px 0 14px; margin-right: 1px;
  border: 1px solid #4b5553; border-radius: 20px; background: #394644; font-size: 17px; color: #d5d8d8;
}
.art { width: 56px; height: 30px; }
.tray { display: flex; align-items: center; justify-content: flex-end; gap: 10px; padding-right: 24px; }
.tray .od { margin: 0 10px 0 12px; }
.tray p { width: 80px; text-align: right; white-space: nowrap; }
```
